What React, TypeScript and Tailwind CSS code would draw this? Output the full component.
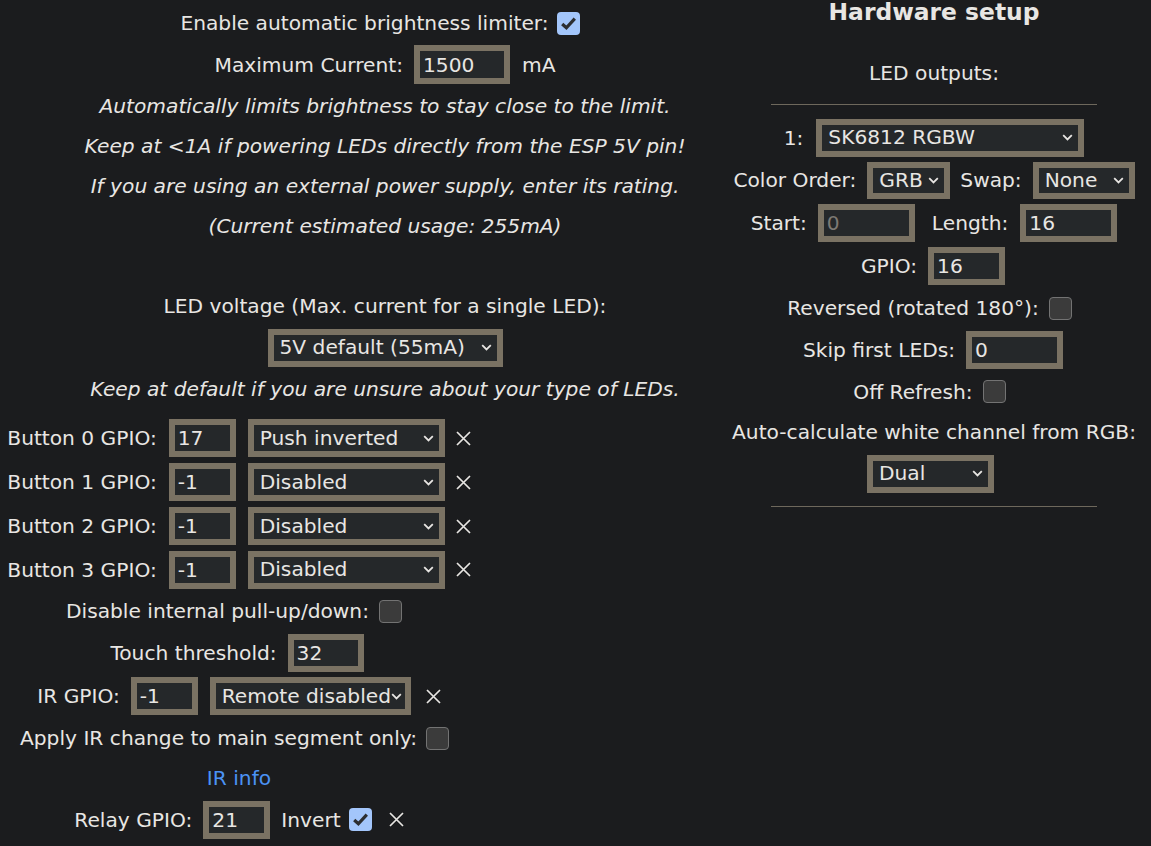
import React from "react";

const TXT = "text-[#e8e6e3]";

function Input({ w, value, disabled }: { w: string; value: string; disabled?: boolean }) {
  return (
    <input
      type="text"
      readOnly
      defaultValue={value}
      className={`box-border h-[38px] ${w} border-[6px] border-[#7a7263] bg-[#25282a] px-[3px] text-[20.2px] leading-none outline-none ${
        disabled ? "text-[#7d7a74]" : "text-[#e8e6e3]"
      }`}
    />
  );
}

function Select({ w, value }: { w: string; value: string }) {
  return (
    <div
      className={`box-border flex h-[38px] ${w} shrink-0 items-center justify-between border-[6px] border-[#7a7263] bg-[#25282a] pl-[6px] pr-[5px] text-[20.2px] leading-none text-[#e8e6e3]`}
    >
      <span className="whitespace-nowrap">{value}</span>
      <svg width="11" height="7" viewBox="0 0 11 7" className="shrink-0">
        <path d="M1.2 1.2 L5.5 5.4 L9.8 1.2" fill="none" stroke="#e8e6e3" strokeWidth="1.8" />
      </svg>
    </div>
  );
}

function Check({ on }: { on?: boolean }) {
  if (on) {
    return (
      <span className="inline-flex h-[23px] w-[23px] shrink-0 items-center justify-center rounded-[4px] bg-[#a3c6fb]">
        <svg width="17" height="15" viewBox="0 0 17 15">
          <path d="M2.2 8 L6.4 11.8 L14.8 2.6" fill="none" stroke="#2c2e31" strokeWidth="3.2" />
        </svg>
      </span>
    );
  }
  return (
    <span className="inline-block h-[23px] w-[23px] shrink-0 rounded-[4px] border-[1.5px] border-[#737373] bg-[#3b3b3b]" />
  );
}

function XIcon() {
  return (
    <svg width="15" height="15" viewBox="0 0 15 15" className="shrink-0">
      <path d="M1 1 L14 14 M14 1 L1 14" stroke="#e8e6e3" strokeWidth="1.7" fill="none" />
    </svg>
  );
}

function Row({ h, children, className = "" }: { h: string; children?: React.ReactNode; className?: string }) {
  return (
    <div className={`flex ${h} items-center justify-center whitespace-nowrap leading-[40px] ${className}`}>
      {children}
    </div>
  );
}

function ButtonRow({ n, gpio, mode, h }: { n: number; gpio: string; mode: string; h: string }) {
  return (
    <Row h={h}>
      <span>Button {n} GPIO:</span>
      <span className="ml-[12px]">
        <Input w="w-[67px]" value={gpio} />
      </span>
      <span className="ml-[12px]">
        <Select w="w-[197px]" value={mode} />
      </span>
      <span className="ml-[11px] flex">
        <XIcon />
      </span>
    </Row>
  );
}

export default function App() {
  return (
    <div
      className={`flex h-[846px] w-[1151px] overflow-hidden bg-[#1b1c1e] font-['DejaVu_Sans',sans-serif] text-[20.2px] ${TXT}`}
    >
      {/* Left column */}
      <div className="flex w-[760px] shrink-0 flex-col pt-[3px]">
        <div className="flex w-[770px] flex-col">
          <Row h="h-[40px]" className="pr-[10px]">
            <span>Enable automatic brightness limiter:</span>
            <span className="ml-[8px] flex">
              <Check on />
            </span>
          </Row>
          <Row h="h-[43px]">
            <span>Maximum Current:</span>
            <span className="ml-[11px]">
              <Input w="w-[96px] !h-[39px]" value="1500" />
            </span>
            <span className="ml-[12px]">mA</span>
          </Row>
          <Row h="h-[40px]" className="italic">
            Automatically limits brightness to stay close to the limit.
          </Row>
          <Row h="h-[40px]" className="italic">
            Keep at &lt;1A if powering LEDs directly from the ESP 5V pin!
          </Row>
          <Row h="h-[40px]" className="italic">
            If you are using an external power supply, enter its rating.
          </Row>
          <Row h="h-[40px]" className="italic">
            (Current estimated usage: 255mA)
          </Row>
          <div className="h-[40px]" />
          <Row h="h-[40px]">LED voltage (Max. current for a single LED):</Row>
          <Row h="h-[43px]">
            <Select w="w-[235px]" value="5V default (55mA)" />
          </Row>
          <Row h="h-[40px]" className="italic">
            Keep at default if you are unsure about your type of LEDs.
          </Row>
        </div>

        <div className="mt-[7px] flex w-[478px] flex-col">
          <ButtonRow n={0} gpio="17" mode="Push inverted" h="h-[44px]" />
          <ButtonRow n={1} gpio="-1" mode="Disabled" h="h-[44px]" />
          <ButtonRow n={2} gpio="-1" mode="Disabled" h="h-[44px]" />
          <ButtonRow n={3} gpio="-1" mode="Disabled" h="h-[43px]" />
          <Row h="h-[40px]" className="pr-[10px]">
            <span>Disable internal pull-up/down:</span>
            <span className="ml-[10px] flex">
              <Check />
            </span>
          </Row>
          <Row h="h-[43px]" className="pr-[4px]">
            <span>Touch threshold:</span>
            <span className="ml-[11px]">
              <Input w="w-[76px]" value="32" />
            </span>
          </Row>
          <Row h="h-[44px]">
            <span>IR GPIO:</span>
            <span className="ml-[11px]">
              <Input w="w-[67px]" value="-1" />
            </span>
            <span className="ml-[12px]">
              <Select w="w-[201px]" value="Remote disabled" />
            </span>
            <span className="ml-[15px] flex">
              <XIcon />
            </span>
          </Row>
          <Row h="h-[40px]" className="pr-[9px]">
            <span>Apply IR change to main segment only:</span>
            <span className="ml-[9px] flex">
              <Check />
            </span>
          </Row>
          <Row h="h-[40px]">
            <a className="text-[#4b93f5]" href="#">
              IR info
            </a>
          </Row>
          <Row h="h-[43px]">
            <span>Relay GPIO:</span>
            <span className="ml-[11px]">
              <Input w="w-[67px]" value="21" />
            </span>
            <span className="ml-[11px]">Invert</span>
            <span className="ml-[8px] flex">
              <Check on />
            </span>
            <span className="ml-[17px] flex">
              <XIcon />
            </span>
          </Row>
        </div>
      </div>

      {/* Right column */}
      <div className="flex w-[348px] shrink-0 flex-col items-center">
        <h3 className="h-[24px] whitespace-nowrap text-[23.4px] font-bold leading-[24px]">Hardware setup</h3>
        <Row h="h-[40px]" className="mt-[29px]">
          LED outputs:
        </Row>
        <div className="mt-[11px] w-[326px] border-t border-[#6e685c]" />
        <Row h="h-[43px]" className="mt-[11px]">
          <span>1:</span>
          <span className="ml-[13px]">
            <Select w="w-[268px]" value="SK6812 RGBW" />
          </span>
        </Row>
        <Row h="h-[42px]">
          <span>Color Order:</span>
          <span className="ml-[11px]">
            <Select w="w-[83px] !h-[37px]" value="GRB" />
          </span>
          <span className="ml-[10px]">Swap:</span>
          <span className="ml-[11px]">
            <Select w="w-[102px] !h-[37px]" value="None" />
          </span>
        </Row>
        <Row h="h-[43px]">
          <span>Start:</span>
          <span className="ml-[11px]">
            <Input w="w-[97px]" value="0" disabled />
          </span>
          <span className="ml-[17px]">Length:</span>
          <span className="ml-[12px]">
            <Input w="w-[97px]" value="16" />
          </span>
        </Row>
        <Row h="h-[44px]" className="pr-[2px]">
          <span>GPIO:</span>
          <span className="ml-[11px]">
            <Input w="w-[77px]" value="16" />
          </span>
        </Row>
        <Row h="h-[40px]" className="pr-[9px]">
          <span>Reversed (rotated 180°):</span>
          <span className="ml-[10px] flex">
            <Check />
          </span>
        </Row>
        <Row h="h-[43px]" className="pr-[2px]">
          <span>Skip first LEDs:</span>
          <span className="ml-[11px]">
            <Input w="w-[97px]" value="0" />
          </span>
        </Row>
        <Row h="h-[41px]" className="pr-[9px]">
          <span>Off Refresh:</span>
          <span className="ml-[10px] flex">
            <Check />
          </span>
        </Row>
        <Row h="h-[40px]">Auto-calculate white channel from RGB:</Row>
        <Row h="h-[43px]" className="pr-[7px]">
          <Select w="w-[127px]" value="Dual" />
        </Row>
        <div className="mt-[11px] w-[326px] border-t border-[#6e685c]" />
      </div>
    </div>
  );
}
